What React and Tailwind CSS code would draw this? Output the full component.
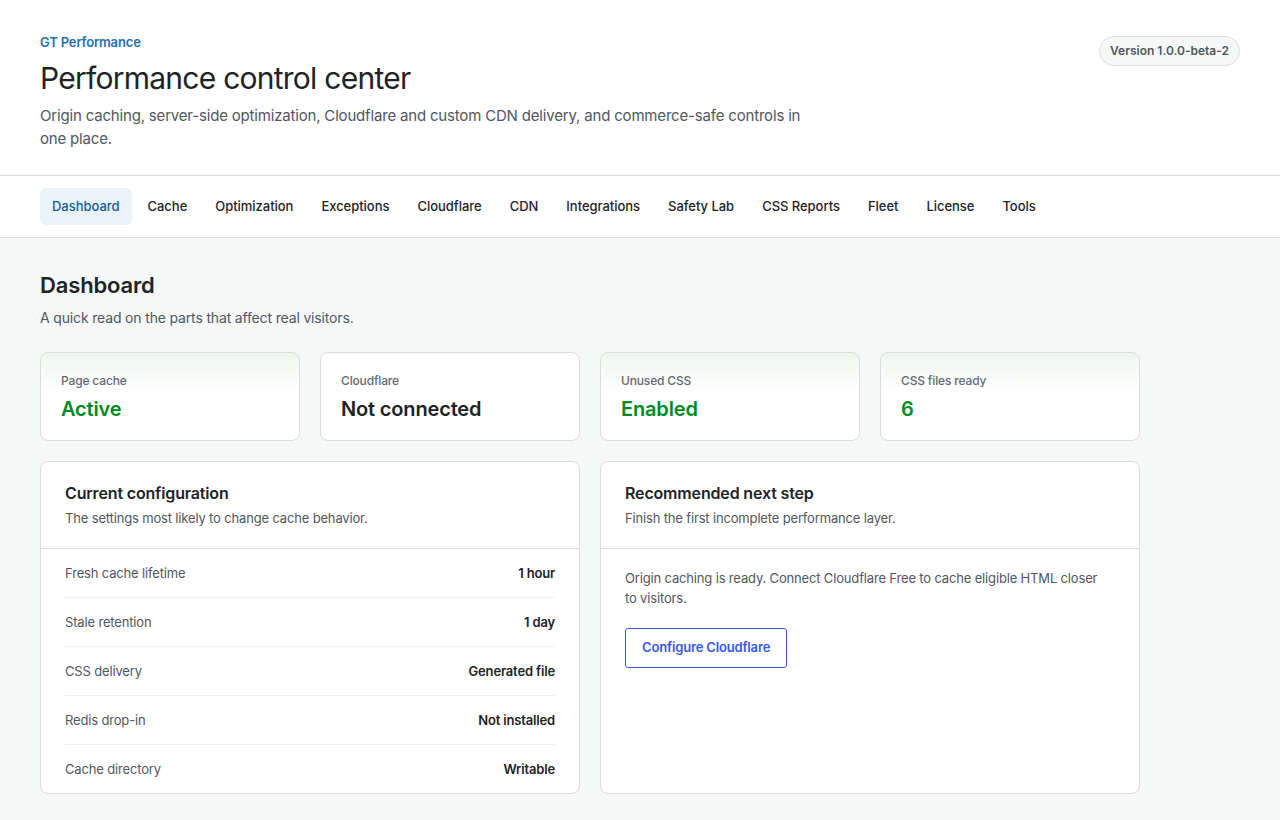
import { useState } from 'react';

const tabs = [
  'Dashboard',
  'Cache',
  'Optimization',
  'Exceptions',
  'Cloudflare',
  'CDN',
  'Integrations',
  'Safety Lab',
  'CSS Reports',
  'Fleet',
  'License',
  'Tools',
];

const stats = [
  { label: 'Page cache', value: 'Active', good: true },
  { label: 'Cloudflare', value: 'Not connected', good: false },
  { label: 'Unused CSS', value: 'Enabled', good: true },
  { label: 'CSS files ready', value: '6', good: true },
];

const config = [
  { label: 'Fresh cache lifetime', value: '1 hour' },
  { label: 'Stale retention', value: '1 day' },
  { label: 'CSS delivery', value: 'Generated file' },
  { label: 'Redis drop-in', value: 'Not installed' },
  { label: 'Cache directory', value: 'Writable' },
];

export default function App() {
  const [active, setActive] = useState('Dashboard');

  return (
    <div
      className="min-h-screen bg-[#f6f7f7] text-[#1d2327] tracking-[-0.01em]"
      style={{ fontFamily: 'Inter, "Noto Sans", sans-serif' }}
    >
      {/* Cabecera */}
      <header className="bg-white border-b border-[#dcdcde] px-10 pt-8 pb-[25px] flex justify-between items-start">
        <div>
          <p className="text-[13px] leading-5 font-semibold text-[#2271b1]">GT Performance</p>
          <h1 className="mt-2 text-[30px] leading-9 font-normal tracking-[-0.025em]">Performance control center</h1>
          <p className="mt-2 max-w-[770px] text-[15px] leading-[23px] text-[#50575e] tracking-[-0.012em]">
            Origin caching, server-side optimization, Cloudflare and custom CDN delivery, and commerce-safe controls in one place.
          </p>
        </div>
        <span className="mt-1 rounded-full border border-[#dcdcde] bg-[#f6f7f7] px-[10px] py-[6px] text-[12px] leading-4 font-semibold text-[#50575e] tracking-normal">
          Version 1.0.0-beta-2
        </span>
      </header>

      {/* Navegación */}
      <nav className="bg-white border-b border-[#dcdcde] px-10 py-3 flex gap-1 tracking-[-0.002em]">
        {tabs.map((tab) => (
          <button
            key={tab}
            onClick={() => setActive(tab)}
            className={
              tab === active
                ? 'rounded-md bg-[#e9f3fa] px-3 py-[10px] text-[13px] leading-[17px] font-medium text-[#135e96]'
                : 'rounded-md px-3 py-[10px] text-[13px] leading-[17px] font-medium text-[#1d2327] hover:bg-[#f6f7f7]'
            }
          >
            {tab}
          </button>
        ))}
      </nav>

      <main className="px-10 pt-[33px] pb-10 max-w-[1180px]">
        <h2 className="text-[22px] leading-7 font-semibold">Dashboard</h2>
        <p className="mt-[9px] text-[14px] leading-5 text-[#50575e]">A quick read on the parts that affect real visitors.</p>

        {/* Tarjetas de estado */}
        <div className="mt-6 grid grid-cols-4 gap-5">
          {stats.map((s) => (
            <div
              key={s.label}
              className={
                s.good
                  ? 'rounded-lg border border-[#dcdcde] bg-linear-to-b from-[#ecf7ee] to-white to-45% px-5 pt-5 pb-[17px]'
                  : 'rounded-lg border border-[#dcdcde] bg-white px-5 pt-5 pb-[17px]'
              }
            >
              <p className="text-[12px] leading-4 font-medium text-[#646970]">{s.label}</p>
              <p
                className={
                  s.good
                    ? 'mt-[6px] text-[20px] leading-7 font-semibold text-[#008a20]'
                    : 'mt-[6px] text-[20px] leading-7 font-semibold text-[#1d2327]'
                }
              >
                {s.value}
              </p>
            </div>
          ))}
        </div>

        {/* Paneles */}
        <div className="mt-5 grid grid-cols-2 gap-5 max-w-[1100px]">
          <section className="rounded-lg border border-[#dcdcde] bg-white">
            <div className="px-6 pt-[19px] pb-5 border-b border-[#dcdcde]">
              <h3 className="text-[16px] leading-6 font-semibold">Current configuration</h3>
              <p className="mt-[3px] text-[13px] leading-5 text-[#50575e]">The settings most likely to change cache behavior.</p>
            </div>
            <div className="px-6">
              {config.map((row, i) => (
                <div
                  key={row.label}
                  className={
                    i < config.length - 1
                      ? 'flex justify-between py-[14px] border-b border-[#f0f0f1] text-[13px] leading-5'
                      : 'flex justify-between py-[14px] text-[13px] leading-5'
                  }
                >
                  <span className="text-[#50575e]">{row.label}</span>
                  <span className="font-semibold text-[#1d2327]">{row.value}</span>
                </div>
              ))}
            </div>
          </section>

          <section className="rounded-lg border border-[#dcdcde] bg-white">
            <div className="px-6 pt-[19px] pb-5 border-b border-[#dcdcde]">
              <h3 className="text-[16px] leading-6 font-semibold">Recommended next step</h3>
              <p className="mt-[3px] text-[13px] leading-5 text-[#50575e]">Finish the first incomplete performance layer.</p>
            </div>
            <div className="px-6 pt-[19px]">
              <p className="max-w-[478px] text-[13px] leading-5 text-[#50575e]">
                Origin caching is ready. Connect Cloudflare Free to cache eligible HTML closer to visitors.
              </p>
              <button className="mt-5 h-10 rounded-[3px] border border-[#3858e9] bg-white px-4 text-[13px] font-semibold text-[#3858e9]">
                Configure Cloudflare
              </button>
            </div>
          </section>
        </div>
      </main>
    </div>
  );
}
